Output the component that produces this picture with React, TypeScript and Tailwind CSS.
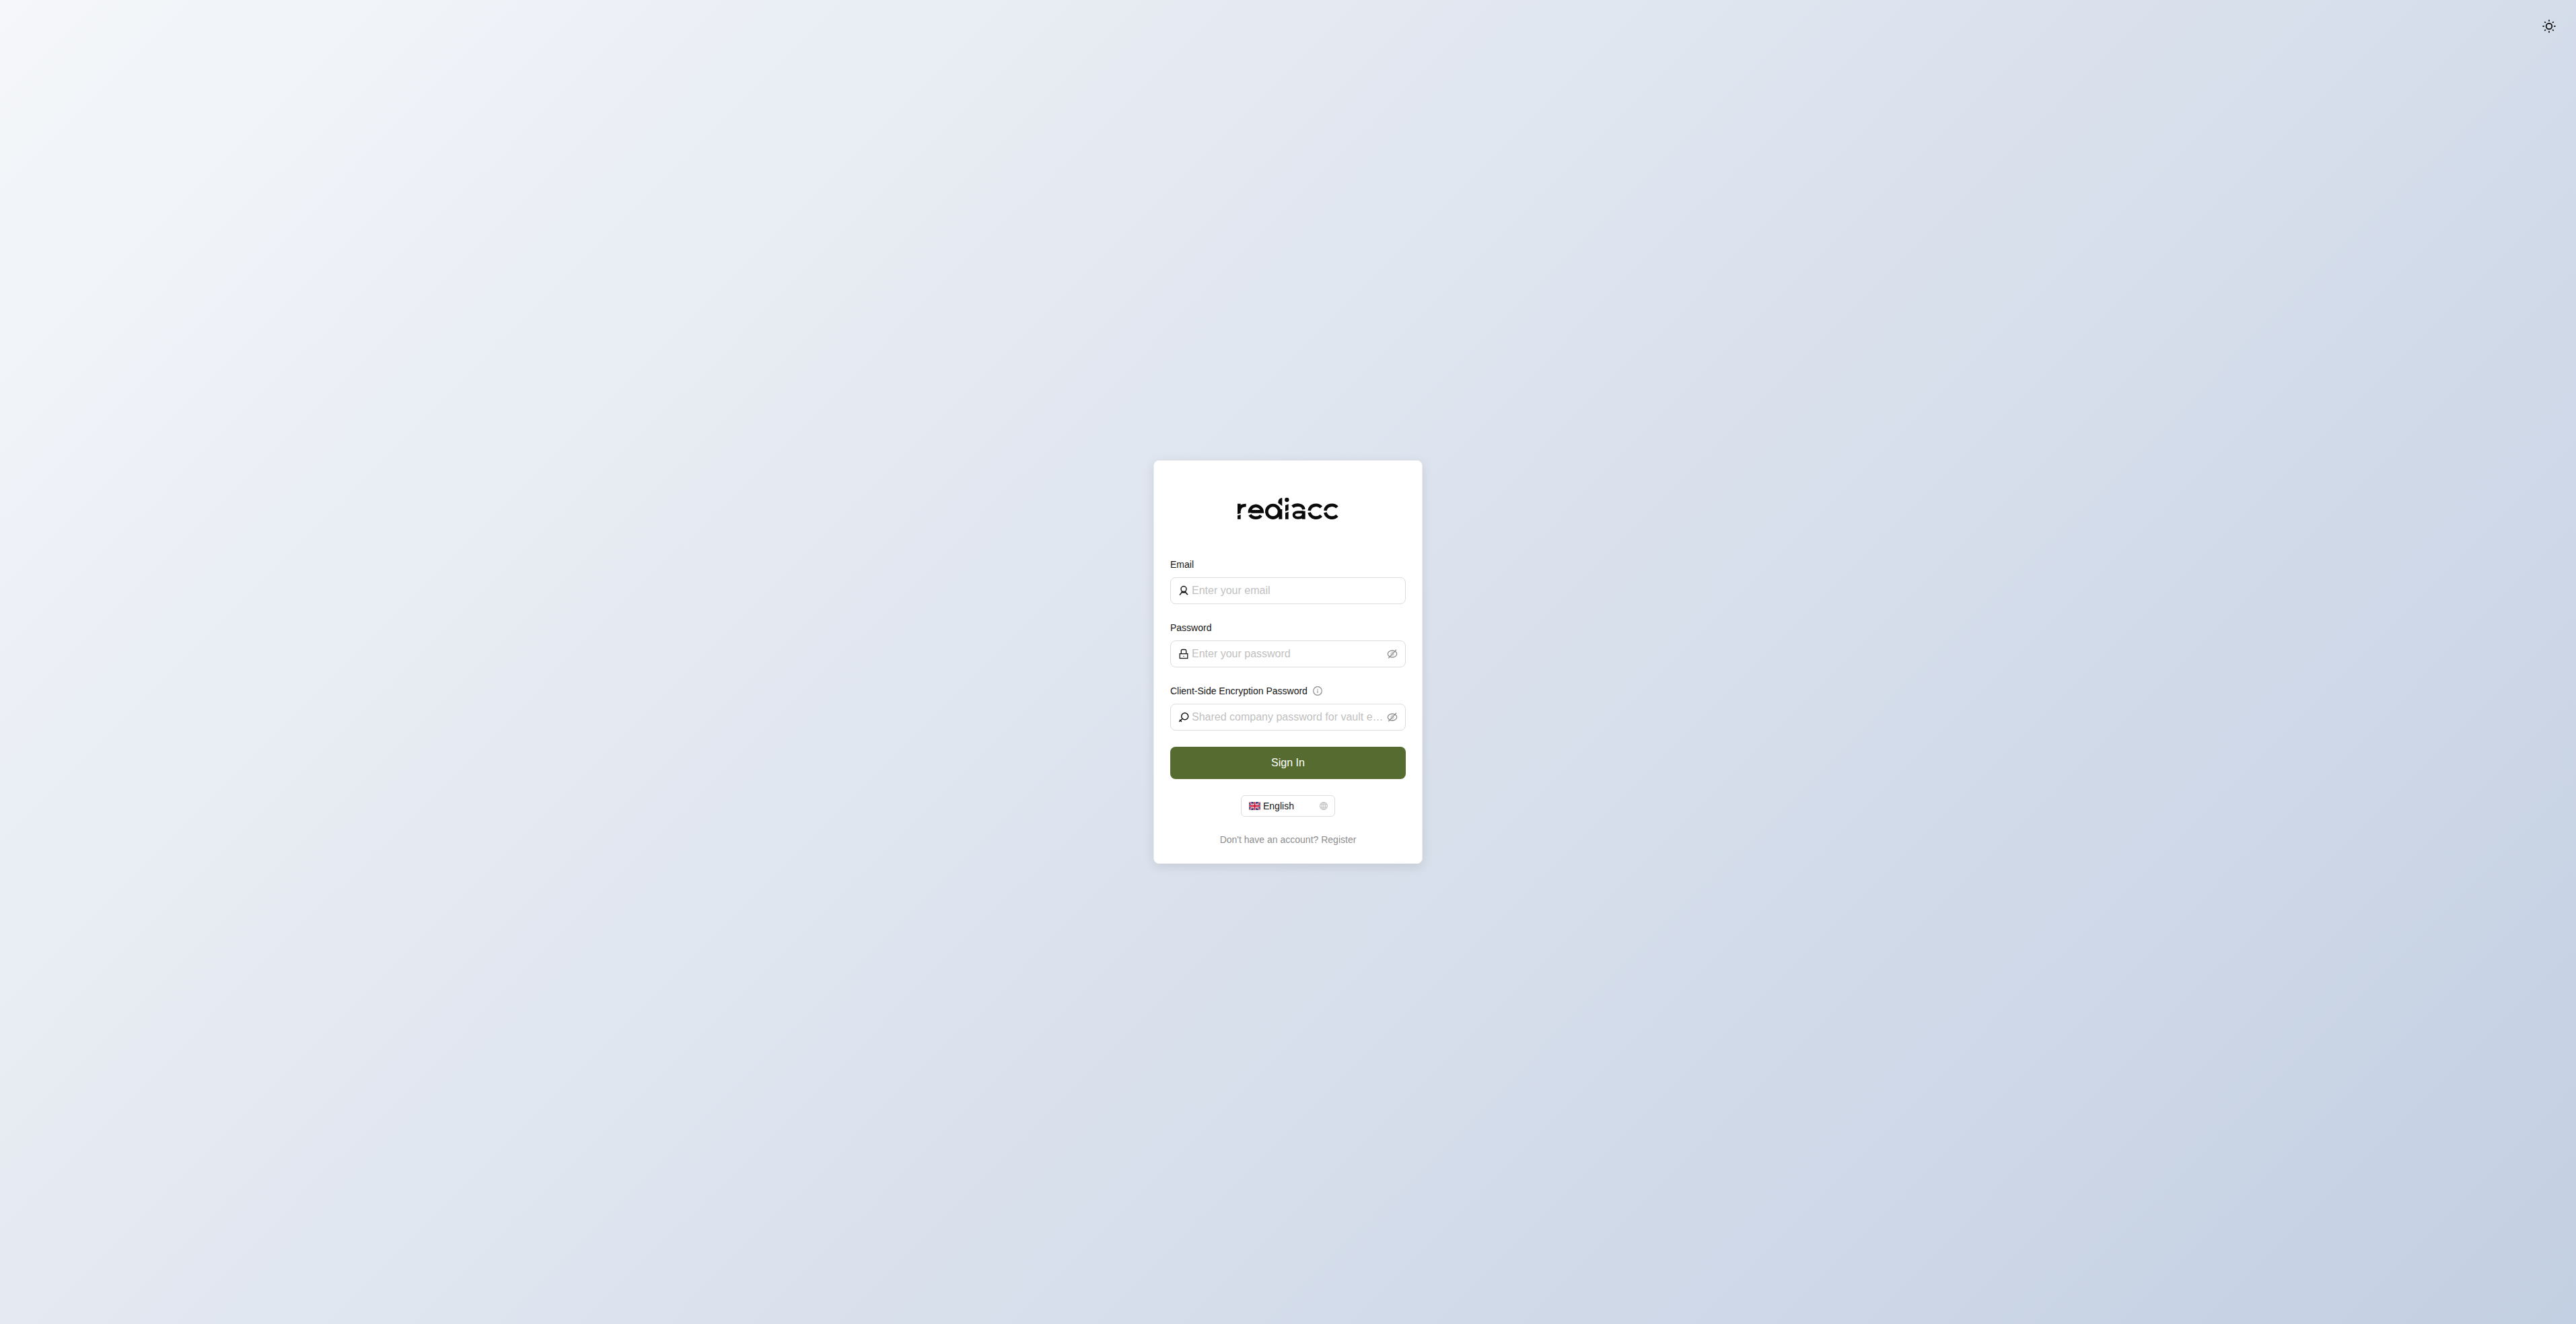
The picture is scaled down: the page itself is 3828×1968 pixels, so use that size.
import { useId, useState } from 'react';
import type { ReactNode } from 'react';

function Logo() {
  return (
    <svg role="img" aria-label="rediacc" viewBox="54 42 456 102" className="h-[34px] w-[152px]">
      <g fill="#0a0a0a">
        <path d="M57 71h14v43l-14 4z" />
        <path d="M57 124l14-4v20H57z" />
        <path d="M256 45v36l-18-13c0-14 6-22 18-23z" />
        <path d="M241 96h15v44h-15z" />
        <circle cx="277" cy="54" r="9.5" />
        <path d="M270 78l14-5v27l-14 5z" />
        <path d="M270 112l14-5v33h-14z" />
        <path d="M344 104h15v36h-15z" />
      </g>
      <g fill="none" stroke="#0a0a0a" strokeWidth="14">
        <path d="M65 103C65 86 75 78 95 78" />
        <path d="M111 112A28 28 0 1 1 167 106H118" />
        <path d="M112 121C122 137 150 139 162 124" />
        <circle cx="215" cy="106" r="28" />
        <path d="M302 85C316 73 349 72 352 97" />
        <path d="M350 109H326C302 109 302 134 326 134C342 134 350 130 352 118" strokeWidth="12" />
        <path d="M377 102C381 76 414 70 430 87" />
        <path d="M377 110C383 136 414 141 430 124" />
        <path d="M448 102C452 76 485 70 501 87" />
        <path d="M448 110C454 136 485 141 501 124" />
      </g>
    </svg>
  );
}

function UserIcon() {
  return (
    <svg viewBox="0 0 16 16" className="size-4 shrink-0" fill="none" stroke="currentColor" strokeWidth="1.5" aria-hidden="true">
      <circle cx="8" cy="5.5" r="4" />
      <path d="M5.500 8.800 4.800 11 2 14.500M4.800 10.700h6M10.500 8.800l.7 2.200" />
      <path d="M11.200 11l2.800 3" strokeWidth="1.700" />
    </svg>
  );
}

function LockIcon() {
  return (
    <svg viewBox="0 0 16 16" className="size-4 shrink-0" fill="none" stroke="currentColor" strokeWidth="1.3" aria-hidden="true">
      <rect x="2.200" y="7.700" width="11.600" height="6.800" />
      <path d="M4.300 7.500V3.300Q4.300 1.500 6.100 1.500h3.800Q11.700 1.500 11.700 3.300v4.200M8 11v1" />
    </svg>
  );
}

function KeyIcon() {
  return (
    <svg viewBox="0 0 16 16" className="size-4 shrink-0" fill="none" stroke="currentColor" strokeWidth="1.5" aria-hidden="true">
      <circle cx="9.700" cy="6.700" r="5" />
      <path d="M6.200 10.200 1.200 14.800M2 11.800l2.900 2.900" />
    </svg>
  );
}

function EyeOffIcon() {
  return (
    <svg viewBox="0 0 16 16" className="size-4" fill="none" stroke="currentColor" strokeWidth="1.3" aria-hidden="true">
      <ellipse cx="8" cy="8" rx="6.700" ry="5" />
      <path d="M2.300 14.200 14 1.800" />
      <path d="M5.800 8.300C6 6.600 7 5.700 8.800 5.600M7.500 10.300C9.300 10.300 10.200 9.300 10.300 7.700" strokeWidth="0.8" />
    </svg>
  );
}

function InfoIcon() {
  return (
    <svg viewBox="0 0 14 14" className="size-3.5" fill="none" stroke="currentColor" strokeWidth="1.2" aria-hidden="true">
      <circle cx="7" cy="7" r="6.300" />
      <path d="M7 6.200v4M7 4v1.200" />
    </svg>
  );
}

function SunIcon() {
  return (
    <svg viewBox="0 0 20 20" className="size-5" fill="none" stroke="currentColor" strokeWidth="1.9" aria-hidden="true">
      <circle cx="10" cy="10" r="4.300" />
      <path d="M10 .5v2.300M10 17.200v2.300M.5 10h2.300M17.200 10h2.300M3.300 3.300l1.600 1.600M15.100 15.100l1.600 1.600M3.300 16.700l1.600-1.600M15.100 4.900l1.600-1.600" />
    </svg>
  );
}

function GlobeIcon() {
  return (
    <svg viewBox="0 0 12 12" className="size-3" fill="none" stroke="currentColor" aria-hidden="true">
      <circle cx="6" cy="6" r="5.400" strokeWidth="1.2" />
      <ellipse cx="6" cy="6" rx="2.700" ry="5.400" />
      <path d="M1 4h10M1 8h10M6 .6v10.800" />
    </svg>
  );
}

function UnionFlag() {
  return (
    <svg viewBox="0 0 34 24" className="h-3 w-[17px]" aria-hidden="true">
      <path fill="#1f2d6e" d="M0 0h34v24H0z" />
      <path stroke="#fff" strokeWidth="4" d="M0 0l34 24M34 0L0 24" />
      <path stroke="#d21034" strokeWidth="2" d="M0 0l34 24M34 0L0 24" />
      <path stroke="#fff" strokeWidth="7" d="M17 0v24M0 12h34" />
      <path stroke="#d21034" strokeWidth="4" d="M17 0v24M0 12h34" />
    </svg>
  );
}

type FieldProps = {
  label: string;
  placeholder: string;
  icon: ReactNode;
  secret?: boolean;
  hint?: boolean;
};

function Field({ label, placeholder, icon, secret = false, hint = false }: FieldProps) {
  const id = useId();
  const [visible, setVisible] = useState(false);
  return (
    <div className="mb-6 flex flex-col gap-2">
      <div className="flex items-center gap-2 text-sm leading-[22px]">
        <label htmlFor={id}>{label}</label>
        {hint && (
          <button type="button" aria-label="More information" className="text-[#8c8c8c]">
            <InfoIcon />
          </button>
        )}
      </div>
      <div className="flex h-10 items-center gap-1 rounded-lg border border-[#dcdcdc] bg-white px-[11px]">
        {icon}
        <input
          id={id}
          type={secret && !visible ? 'password' : 'text'}
          placeholder={placeholder}
          className="min-w-0 flex-1 text-ellipsis bg-transparent text-base leading-6 outline-none placeholder:text-[#bfbfbf]"
        />
        {secret && (
          <button type="button" aria-label="Toggle visibility" className="text-[#8c8c8c]" onClick={() => setVisible(!visible)}>
            <EyeOffIcon />
          </button>
        )}
      </div>
    </div>
  );
}

export default function App() {
  return (
    <main className="relative flex min-h-screen items-center justify-center bg-[linear-gradient(135deg,#f5f7fa_0%,#c3cfe2_100%)] font-['Liberation_Sans',Arial,sans-serif] text-[#141414]">
      <button type="button" aria-label="Switch theme" className="absolute top-5 right-5 flex h-[38px] w-10 items-center justify-center">
        <SunIcon />
      </button>

      <div className="w-full max-w-[400px] rounded-lg border border-[#f0f0f0] bg-white p-6 shadow-[0_4px_16px_rgba(0,0,0,0.1)]">
        <div className="mb-[55px] flex justify-center pt-[30px]">
          <Logo />
        </div>

        <form onSubmit={(event) => event.preventDefault()}>
          <Field label="Email" placeholder="Enter your email" icon={<UserIcon />} />
          <Field label="Password" placeholder="Enter your password" icon={<LockIcon />} secret />
          <Field
            label="Client-Side Encryption Password"
            placeholder="Shared company password for vault encryption"
            icon={<KeyIcon />}
            secret
            hint
          />
          <button type="submit" className="h-12 w-full rounded-lg bg-[#556b2f] text-base text-white">
            Sign In
          </button>
        </form>

        <div className="mt-6 flex justify-center">
          <div className="relative">
            <select
              aria-label="Language"
              className="block h-8 w-[140px] appearance-none rounded-md border border-[#dcdcdc] bg-white pr-7 pl-8 text-sm"
            >
              <option>English</option>
            </select>
            <span className="pointer-events-none absolute inset-y-0 left-3 flex items-center">
              <UnionFlag />
            </span>
            <span className="pointer-events-none absolute inset-y-0 right-[11px] flex items-center text-[#bfbfbf]">
              <GlobeIcon />
            </span>
          </div>
        </div>

        <p className="mt-[23px] text-center text-sm leading-[22px] text-[#8c8c8c]">
          Don't have an account? <a href="#register">Register</a>
        </p>
      </div>
    </main>
  );
}
